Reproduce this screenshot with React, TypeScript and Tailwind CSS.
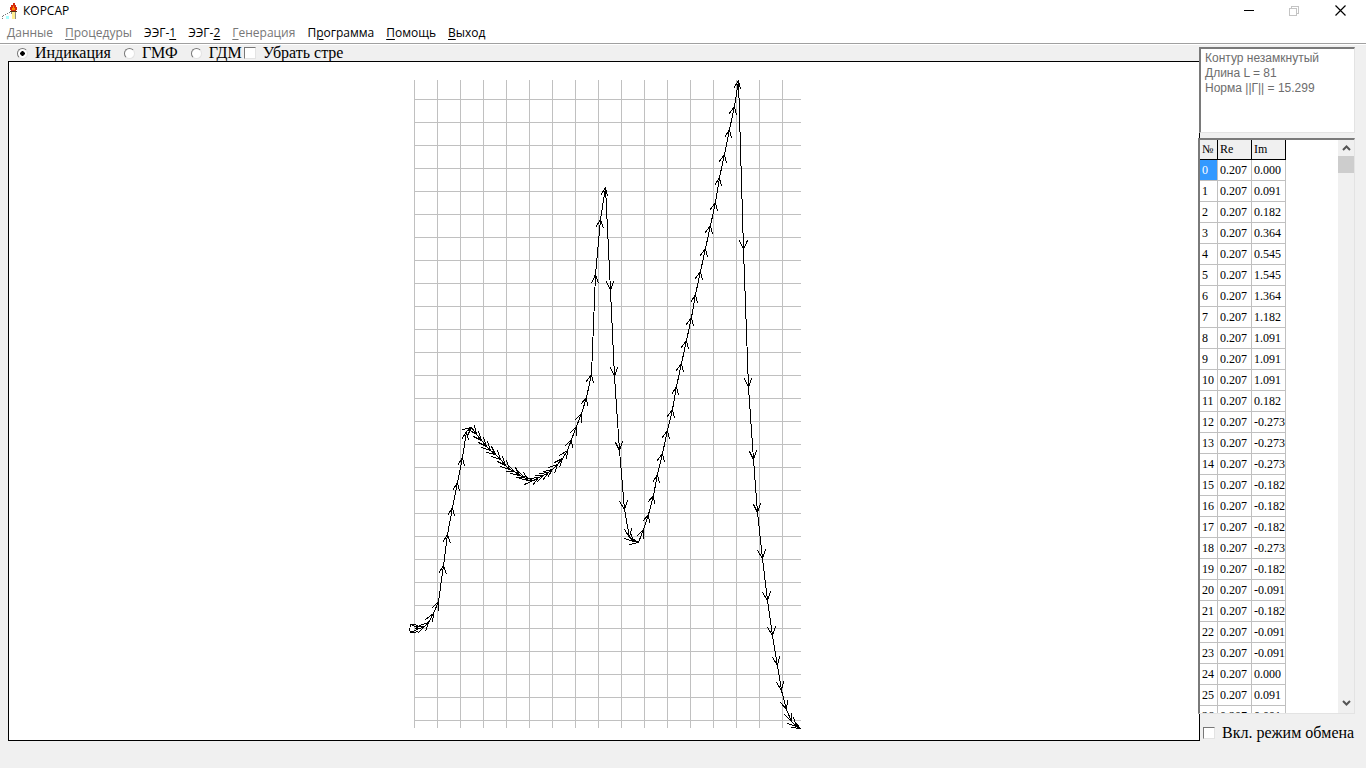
import React from "react";

const STEP = 23;
const ORIGIN_X = 414;
const ORIGIN_Y = 628;
const RE = 0.207;

const IM = [
  0, 0.091, 0.182, 0.364, 0.545, 1.545, 1.364, 1.182, 1.091, 1.091, 1.091, 0.182, -0.273, -0.273,
  -0.273, -0.182, -0.182, -0.182, -0.273, -0.182, -0.091, -0.182, -0.091, -0.091, 0, 0.091, 0.091,
];

const TAIL_Y = [
  475, 472, 469, 464, 458, 450, 439, 426, 413, 397, 374, 274, 219, 187, 290, 376, 450, 509, 537, 541,
  542, 529, 514, 495, 474, 453, 430, 409, 386, 363, 340, 317, 294, 271, 248, 225, 202, 177, 154, 129,
  106, 80, 249, 387, 459, 512, 558, 600, 635, 665, 690, 709, 721, 726, 728,
];

type Point = { x: number; y: number };

function contour(): Point[] {
  const ys: number[] = [ORIGIN_Y];
  for (let i = 0; i < 26; i++) ys.push(ys[i] - IM[i] * STEP);
  return ys.concat(TAIL_Y).map((y, i) => ({
    x: Math.round(ORIGIN_X + i * RE * STEP * 1.002),
    y: Math.round(y),
  }));
}

function arrowPath(a: Point, b: Point): string {
  const back = Math.atan2(a.y - b.y, a.x - b.x);
  const wing = (d: number) =>
    `${Math.round(b.x + 9.5 * Math.cos(back + d))} ${Math.round(b.y + 9.5 * Math.sin(back + d))}`;
  return `M${a.x} ${a.y}L${b.x} ${b.y}M${wing(0.41)}L${b.x} ${b.y}L${wing(-0.41)}`;
}

function Plot() {
  const pts = contour();
  const grid: string[] = [];
  for (let x = 414; x <= 782; x += STEP) grid.push(`M${x + 0.5} 80V728`);
  for (let y = 99; y <= 720; y += STEP) grid.push(`M414 ${y + 0.5}H801`);
  return (
    <svg
      viewBox="404 62 400 678"
      width="400"
      height="678"
      className="shrink-0"
      role="img"
      aria-label="Контур"
      shapeRendering="crispEdges"
      fill="none"
    >
      <path d={grid.join("")} stroke="#c0c0c0" />
      <g transform="translate(0.5 0.5)" stroke="#000">
        <path d={pts.slice(1).map((p, i) => arrowPath(pts[i], p)).join("")} />
        <path d="M411 624h4l3 2M409 627v3l2 2h4l3-2M409 627l2-3" />
      </g>
    </svg>
  );
}

function Torch() {
  return (
    <svg viewBox="0 0 16 16" width="16" height="16" shapeRendering="crispEdges" aria-hidden="true">
      <path d="M0 13h1v1H0zM0 15h1v1H0zM1 12h1v1H1zM3 11h1v1H3zM5 10h1v1H5zM7 9h1v1H7z" fill="#777" />
      <path d="M4 13h3v3H4z" fill="#a8ffff" />
      <path d="M11 0h2v2h1v2h1v3h-1v1H9V7H8V4h1V2h2z" fill="#d32a10" />
      <path d="M11 3h1v2h1v2h-3V5h1z" fill="#ff8a00" />
      <path d="M8 8h7v1H8z" fill="#5a3010" />
      <path d="M10 9h3v7h-3z" fill="#ffee90" />
      <path d="M9 9h1v2H9zM13 9h1v7h-1z" fill="#8c8c8c" />
    </svg>
  );
}

const MENU: { pre: string; key: string; post: string; off?: boolean }[] = [
  { pre: "", key: "Д", post: "анные", off: true },
  { pre: "", key: "П", post: "роцедуры", off: true },
  { pre: "ЭЭГ-", key: "1", post: "" },
  { pre: "ЭЭГ-", key: "2", post: "" },
  { pre: "", key: "Г", post: "енерация", off: true },
  { pre: "П", key: "р", post: "ограмма" },
  { pre: "", key: "П", post: "омощь" },
  { pre: "", key: "В", post: "ыход" },
];

const SUNKEN =
  "border-t-2 border-l-2 border-r border-b border-t-[#7a7a7a] border-l-[#7a7a7a] border-r-[#e3e3e3] border-b-[#e3e3e3]";

const CHECKBOX =
  "size-3 shrink-0 appearance-none border border-t-[#777] border-l-[#777] border-r-[#e3e3e3] border-b-[#e3e3e3] bg-white checked:bg-gray-700";

const RADIO =
  "size-[11px] shrink-0 appearance-none rounded-full border border-t-[#777] border-l-[#777] border-r-[#e3e3e3] border-b-[#e3e3e3] bg-white checked:bg-[radial-gradient(circle,#000_2px,#fff_2.5px)]";

const HEAD = "border-r border-b border-black bg-[#f0f0f0] pl-0.5 leading-[19px] font-normal";
const CELL = "border-r border-b border-[#c0c0c0] pl-0.5";

function Radio({ label, on }: { label: string; on?: boolean }) {
  return (
    <label className="flex items-center gap-[7px] whitespace-nowrap">
      <input type="radio" name="mode" defaultChecked={on} className={RADIO} />
      {label}
    </label>
  );
}

export default function App() {
  return (
    <div className="flex h-screen flex-col overflow-hidden bg-[#f0f0f0] font-['Liberation_Serif',serif] text-base text-black">
      <header className="shrink-0 border-b border-[#a0a0a0] bg-white font-['Open_Sans',sans-serif] text-xs">
        <div className="flex h-[22px] items-center">
          <div className="flex flex-1 items-center gap-[5px] pl-0.5">
            <Torch />
            <h1>КОРСАР</h1>
          </div>
          <button type="button" aria-label="Свернуть" className="flex w-[46px] justify-center">
            <svg width="10" height="10" shapeRendering="crispEdges">
              <path d="M0 4h10v1H0z" />
            </svg>
          </button>
          <button type="button" aria-label="Развернуть" disabled className="flex w-11 justify-center">
            <svg width="10" height="10" fill="none" stroke="#c4c4c4" shapeRendering="crispEdges">
              <path d="M.5 2.5h7v7h-7zM2.5 2.5v-2h7v7h-2" />
            </svg>
          </button>
          <button type="button" aria-label="Закрыть" className="flex w-[50px] justify-center">
            <svg width="12" height="12" stroke="#000" strokeWidth="1.2">
              <path d="M.5 .5l10 10M10.5 .5l-10 10" />
            </svg>
          </button>
        </div>
        <nav className="flex h-[21px] items-center gap-3 pl-[7px]">
          {MENU.map((m) => (
            <button
              key={m.pre + m.key + m.post}
              type="button"
              disabled={m.off}
              className="whitespace-nowrap disabled:text-[#777]"
            >
              {m.pre}
              <span className="underline underline-offset-2">{m.key}</span>
              {m.post}
            </button>
          ))}
        </nav>
      </header>

      <div className="flex min-h-0 flex-1 border-t border-white pr-[11px]">
        <main className="mb-[27px] flex min-w-0 flex-1 flex-col pl-2">
          <div className="flex h-4 shrink-0 items-center pl-[9px] leading-4">
            <div className="flex gap-[13px]">
              <Radio label="Индикация" on />
              <Radio label="ГМФ" />
              <Radio label="ГДМ" />
            </div>
            <label className="ml-0.5 flex items-center gap-[7px] whitespace-nowrap">
              <input type="checkbox" className={CHECKBOX} />
              Убрать стре
            </label>
          </div>
          <div className="flex min-h-0 flex-1 items-center justify-center overflow-hidden border border-black bg-white">
            <Plot />
          </div>
        </main>

        <aside className="-ml-px flex w-[156px] shrink-0 flex-col pt-0.5">
          <textarea
            readOnly
            aria-label="Сведения о контуре"
            className={`${SUNKEN} h-[86px] shrink-0 resize-none overflow-hidden bg-white px-1 py-0.5 font-['Liberation_Sans',sans-serif] text-xs leading-[15px] text-[#6d6d6d] outline-none`}
            defaultValue={"Контур незамкнутый\nДлина L = 81\nНорма ||Г|| = 15.299"}
          />
          <div className={`${SUNKEN} mt-[5px] -ml-px flex min-h-0 flex-1 justify-between bg-white`}>
            <div className="overflow-hidden">
              <table className="w-[86px] table-fixed border-separate border-spacing-0 text-xs leading-5">
                <thead>
                  <tr className="text-left">
                    <th className={`${HEAD} w-[18px]`}>№</th>
                    <th className={`${HEAD} w-[34px]`}>Re</th>
                    <th className={`${HEAD} w-[34px]`}>Im</th>
                  </tr>
                </thead>
                <tbody>
                  {IM.map((im, i) => (
                    <tr key={i}>
                      <td className={`${CELL} ${i === 0 ? "bg-[#3399ff] text-white" : ""}`}>{i}</td>
                      <td className={CELL}>{RE}</td>
                      <td className={CELL}>{im.toFixed(3)}</td>
                    </tr>
                  ))}
                </tbody>
              </table>
            </div>
            <div className="flex w-4 flex-col bg-[#f0f0f0]">
              <button type="button" aria-label="Вверх" className="flex h-4 items-center justify-center">
                <svg width="9" height="6" fill="none" stroke="#555" strokeWidth="2">
                  <path d="M1 5l3.5-3.5L8 5" />
                </svg>
              </button>
              <div className="h-[17px] bg-[#cdcdcd]" />
              <div className="flex-1" />
              <button type="button" aria-label="Вниз" className="flex h-5 items-center justify-center">
                <svg width="9" height="6" fill="none" stroke="#555" strokeWidth="2">
                  <path d="M1 1l3.5 3.5L8 1" />
                </svg>
              </button>
            </div>
          </div>
          <label className="flex h-[54px] shrink-0 items-start gap-[7px] pt-[9px] pl-1 leading-5 whitespace-nowrap">
            <input type="checkbox" className={`${CHECKBOX} mt-1`} />
            Вкл. режим обмена
          </label>
        </aside>
      </div>
    </div>
  );
}
